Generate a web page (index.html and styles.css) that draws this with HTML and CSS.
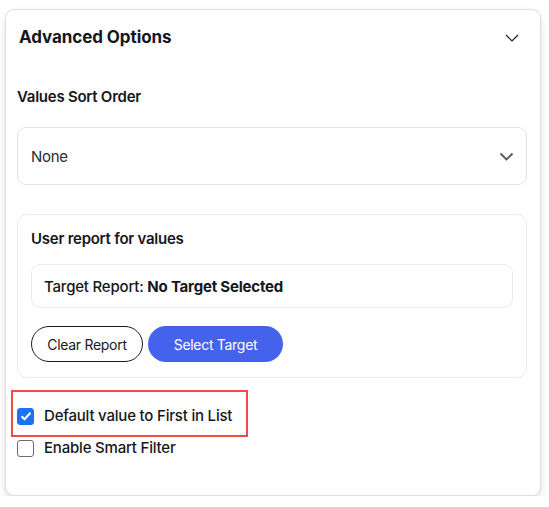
FILE: index.html
```html
<!DOCTYPE html>
<html>
<head>
<meta charset="utf-8">
<link rel="stylesheet" href="styles.css">
</head>
<body>
<div class="card">
  <div class="header">
    <span class="title">Advanced Options</span>
    <svg class="hchev" width="14" height="8" viewBox="0 0 14 8"><path d="M1 1l6 6 6-6" fill="none" stroke="#1a1a22" stroke-width="1.2"/></svg>
  </div>
  <div class="body">
    <div class="label">Values Sort Order</div>
    <div class="select">
      <span>None</span>
      <svg width="15" height="9" viewBox="0 0 15 9"><path d="M1.5 1.5l6 6 6-6" fill="none" stroke="#55555c" stroke-width="1.8"/></svg>
    </div>
    <div class="report">
      <div class="label">User report for values</div>
      <div class="target"><span class="tl">Target Report: </span><b>No Target Selected</b></div>
      <div class="buttons">
        <button class="btn outline">Clear Report</button>
        <button class="btn primary">Select Target</button>
      </div>
    </div>
    <div class="checks">
      <div class="highlight">
        <label class="check"><span class="box on"><svg width="12" height="10" viewBox="0 0 12 10"><path d="M1.5 5.2l3 3 6-6.5" fill="none" stroke="#fff" stroke-width="2"/></svg></span>Default value to First in List</label>
      </div>
      <label class="check"><span class="box"></span>Enable Smart Filter</label>
    </div>
  </div>
</div>
</body>
</html>
```
FILE: styles.css
```css
* { box-sizing: border-box; }
html, body { margin: 0; background: #fff; }
body {
  padding: 9px 8px 0 5px;
  font-family: Inter, "Noto Sans", sans-serif;
  color: #16161d;
}
.card {
  width: 536px;
  height: 487px;
  border: 1px solid #dedee2;
  border-radius: 9px;
  background: #fff;
  box-shadow: 0 8px 8px rgba(0,0,0,0.09), 0 0 4px rgba(0,0,0,0.05);
}
.header {
  display: flex;
  align-items: center;
  justify-content: space-between;
  height: 54px;
  padding: 0 21px 0 13px;
}
.title {
  font-size: 17px;
  font-weight: 700;
  letter-spacing: -0.08px;
}
.hchev { margin-top: 2px; }
.body {
  padding: 23px 13px 0 11px;
}
.label {
  font-size: 15px;
  font-weight: 600;
  letter-spacing: -0.25px;
  line-height: 20px;
}
.select {
  margin-top: 20px;
  height: 58px;
  border: 1px solid #e2e2e6;
  border-radius: 9px;
  display: flex;
  align-items: center;
  justify-content: space-between;
  padding: 0 12px 0 13px;
  font-size: 15px;
  color: #2a2a30;
  letter-spacing: -0.3px;
}
.report {
  margin-top: 29px;
  height: 164px;
  border: 1px solid #ececef;
  border-radius: 9px;
  padding: 14px 13px 0 13px;
}
.target {
  margin-top: 15px;
  height: 44px;
  border: 1px solid #ececef;
  border-radius: 9px;
  padding: 12px 12px 0;
  font-size: 15px;
  line-height: 20px;
  letter-spacing: -0.2px;
  white-space: pre;
}
.tl { font-weight: 500; }
.target b { font-weight: 700; }
.buttons {
  margin-top: 18px;
  display: flex;
  gap: 5px;
}
.btn {
  height: 36px;
  border-radius: 18px;
  font-family: Inter, "Noto Sans", sans-serif;
  font-size: 14px;
  letter-spacing: -0.3px;
  padding: 0;
}
.btn.outline {
  width: 112px;
  background: #fff;
  border: 1px solid #1a1a22;
  color: #1a1a22;
}
.btn.primary {
  width: 135px;
  background: #4562ec;
  border: none;
  color: #fff;
}
.checks {
  margin-top: 12px;
  display: flex;
  flex-direction: column;
}
.highlight {
  align-self: flex-start;
  margin-left: -6px;
  width: 237px;
  height: 47px;
  border: 2px solid #ef4d44;
  padding: 15px 0 0 4px;
}
.check {
  display: flex;
  align-items: center;
  gap: 10px;
  font-size: 15px;
  font-weight: 500;
  letter-spacing: -0.2px;
  line-height: 18px;
}
.box {
  width: 17px;
  height: 17px;
  border: 1px solid #6b6b72;
  border-radius: 3px;
  display: flex;
  align-items: center;
  justify-content: center;
  flex: none;
}
.box.on {
  background: #1a73f0;
  border-color: #1a73f0;
}
.checks > .check { margin-top: 2px; }
```
